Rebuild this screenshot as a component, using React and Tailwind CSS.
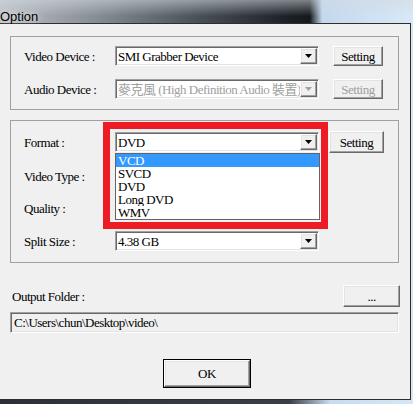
import React from "react";

// classic windows look, all text in a serif bitmap-ish font
const txt =
  "font-['Liberation_Serif','Noto_Sans_CJK_TC',serif] text-[13px] tracking-[-0.5px] leading-none";

const raised =
  "bg-[#f0f0f0] border border-t-white border-l-white border-b-[#696969] border-r-[#696969] shadow-[inset_-1px_-1px_#a0a0a0,inset_1px_1px_#e3e3e3]";

function Arrow({ disabled }) {
  return (
    <svg width="7" height="4" viewBox="0 0 7 4">
      <path d="M0 0h7l-3.5 4z" fill={disabled ? "#a0a0a0" : "#000"} />
    </svg>
  );
}

function Combo({ value, disabled }) {
  return (
    <div
      className={`w-[204px] h-[20px] flex items-stretch bg-white border border-t-[#a0a0a0] border-l-[#a0a0a0] border-b-white border-r-white shadow-[inset_1px_1px_#696969,inset_-1px_-1px_#e3e3e3] ${
        disabled ? "bg-[#f0f0f0]" : ""
      }`}
    >
      <div
        className={`flex-1 overflow-hidden whitespace-nowrap flex items-center pl-[2px] pt-[1px] ${txt} ${
          disabled ? "text-[#a0a0a0]" : "text-black"
        }`}
      >
        {value}
      </div>
      <div
        className={`w-[17px] my-[1px] mr-[1px] flex items-center justify-center ${raised}`}
      >
        <Arrow disabled={disabled} />
      </div>
    </div>
  );
}

function Btn({ children, className = "", disabled }) {
  return (
    <div
      className={`flex items-center justify-center ${raised} ${txt} ${
        disabled ? "text-[#a0a0a0]" : "text-black"
      } ${className}`}
    >
      {children}
    </div>
  );
}

function Row({ label, children, className = "" }) {
  return (
    <div className={`flex items-center ${className}`}>
      <div className={`w-[91px] ${txt} text-black`}>{label}</div>
      {children}
    </div>
  );
}

export default function App() {
  const formats = ["VCD", "SVCD", "DVD", "Long DVD", "WMV"];

  return (
    <div className="relative w-[413px] h-[404px] overflow-hidden bg-[linear-gradient(90deg,#2c3036_0%,#3a3f46_70%,#c8dcf0_80%,#d6e6f6_100%)]">
      {/* title bar (blurred glass behind) */}
      <div className="h-[23px] w-full pt-[3px] bg-[linear-gradient(180deg,rgba(210,218,226,0.55)_0%,rgba(0,0,0,0)_70%),linear-gradient(90deg,#bcc0c4_0%,#8a9098_22%,#4a5058_48%,#1c2026_70%,#15181c_75%,#c4d8ee_78%,#d8e8f6_100%)]">
        <span className="font-['Liberation_Sans',sans-serif] text-[13px] leading-[14px] text-black [text-shadow:0_0_6px_#fff]">
          Option
        </span>
      </div>

      {/* dialog body */}
      <div className="w-[411px] h-[377px] bg-[#f0f0f0] border-t border-r border-b border-[#2e2e2e] flex flex-col">
        {/* devices group */}
        <div className="mt-[12px] ml-[10px] w-[389px] h-[74px] border border-[#a0a0a0] pt-[9px] pl-[13px]">
          <Row label="Video Device :" className="h-[20px]">
            <Combo value="SMI Grabber Device" />
            <Btn className="ml-[14px] w-[50px] h-[20px]">Setting</Btn>
          </Row>
          <Row label="Audio Device :" className="h-[20px] mt-[13px]">
            <Combo value="麥克風 (High Definition Audio 裝置)" disabled />
            <Btn className="ml-[14px] w-[50px] h-[20px]" disabled>
              Setting
            </Btn>
          </Row>
        </div>

        {/* format group */}
        <div className="mt-[10px] ml-[10px] w-[389px] h-[143px] border border-[#a0a0a0] pt-[10px] pl-[13px]">
          <Row label="Format :" className="h-[22px]">
            <Combo value="DVD" />
            <Btn className="ml-[10px] w-[55px] h-[22px]">Setting</Btn>
          </Row>
          <Row label="Video Type :" className="h-[20px] mt-[13px]">
            <Combo value="" />
          </Row>
          <Row label="Quality :" className="h-[20px] mt-[12px]">
            <Combo value="" />
          </Row>
          <Row label="Split Size :" className="h-[20px] mt-[13px]">
            <Combo value="4.38 GB" />
          </Row>
        </div>

        {/* output folder */}
        <div className="mt-[22px] flex items-center justify-between pl-[12px] pr-[10px] h-[22px]">
          <div className={`${txt} text-black`}>Output Folder :</div>
          <Btn className="w-[57px] h-[22px]">...</Btn>
        </div>
        <div
          className={`mt-[5px] ml-[10px] w-[389px] h-[21px] flex items-center pl-[3px] bg-[#f0f0f0] border border-t-[#a0a0a0] border-l-[#a0a0a0] border-b-white border-r-white shadow-[inset_1px_1px_#696969,inset_-1px_-1px_#e3e3e3] ${txt} text-black`}
        >
          C:\Users\chun\Desktop\video\
        </div>

        {/* OK */}
        <div className="mt-[26px] ml-[163px] w-[88px] h-[29px] border border-black flex">
          <Btn className="flex-1">OK</Btn>
        </div>
      </div>

      {/* open dropdown list */}
      <div className="absolute left-[115px] top-[153px] w-[205px] h-[67px] bg-white border border-[#646464] z-10 flex flex-col">
        {formats.map((f, i) => (
          <div
            key={f}
            className={`h-[13px] flex items-center pl-[2px] overflow-hidden font-['Liberation_Serif',serif] text-[13px] tracking-[-0.5px] leading-[12px] ${
              i === 0 ? "bg-[#3399ff] text-white" : "text-black"
            }`}
          >
            {f}
          </div>
        ))}
      </div>

      {/* red highlight frame */}
      <div className="absolute left-[103px] top-[122px] w-[225px] h-[107px] border-[7px] border-[#ed1c24] z-20" />
    </div>
  );
}
